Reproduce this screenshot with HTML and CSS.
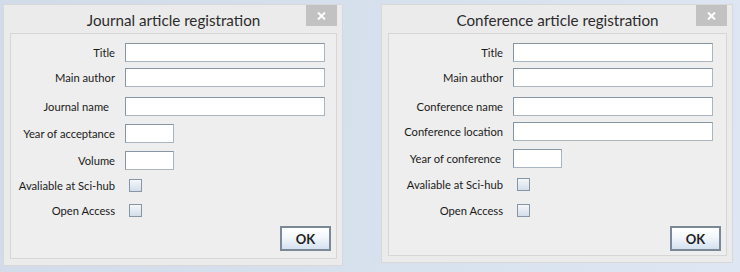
FILE: index.html
```html
<!DOCTYPE html>
<html lang="en">
<head>
    <meta charset="UTF-8">
    <meta name="viewport" content="width=device-width, initial-scale=1.0">
    <title>Article registration</title>
    <link rel="stylesheet" href="styles.css">
</head>
<body>
    <!-- Journal dialog -->
    <div class="window journal">
        <div class="titlebar">
            <span class="title">Journal article registration</span>
            <span class="close">
                <svg width="9" height="8" viewBox="0 0 9 8"><path d="M1 0.5 L8 7.5 M8 0.5 L1 7.5" stroke="#ffffff" stroke-width="1.9"/></svg>
            </span>
        </div>
        <div class="panel">
            <div class="row">
                <span class="label">Title</span>
                <span class="field"></span>
            </div>
            <div class="row near">
                <span class="label">Main author</span>
                <span class="field"></span>
            </div>
            <div class="row far">
                <span class="label indent">Journal name</span>
                <span class="field"></span>
            </div>
            <div class="row">
                <span class="label">Year of acceptance</span>
                <span class="field small"></span>
            </div>
            <div class="row">
                <span class="label">Volume</span>
                <span class="field small"></span>
            </div>
            <div class="row near">
                <span class="label">Avaliable at Sci-hub</span>
                <span class="check"></span>
            </div>
            <div class="row near">
                <span class="label">Open Access</span>
                <span class="check"></span>
            </div>
            <div class="actions">
                <button class="ok">OK</button>
            </div>
        </div>
    </div>

    <!-- Conference dialog -->
    <div class="window conference">
        <div class="titlebar">
            <span class="title">Conference article registration</span>
            <span class="close">
                <svg width="9" height="8" viewBox="0 0 9 8"><path d="M1 0.5 L8 7.5 M8 0.5 L1 7.5" stroke="#ffffff" stroke-width="1.9"/></svg>
            </span>
        </div>
        <div class="panel">
            <div class="row">
                <span class="label">Title</span>
                <span class="field"></span>
            </div>
            <div class="row near">
                <span class="label">Main author</span>
                <span class="field"></span>
            </div>
            <div class="row far">
                <span class="label">Conference name</span>
                <span class="field"></span>
            </div>
            <div class="row near">
                <span class="label">Conference location</span>
                <span class="field"></span>
            </div>
            <div class="row">
                <span class="label indent-small">Year of conference</span>
                <span class="field small"></span>
            </div>
            <div class="row mid">
                <span class="label">Avaliable at Sci-hub</span>
                <span class="check"></span>
            </div>
            <div class="row mid">
                <span class="label">Open Access</span>
                <span class="check"></span>
            </div>
            <div class="actions">
                <button class="ok">OK</button>
            </div>
        </div>
    </div>
</body>
</html>
```

FILE: styles.css
```css
/* Desktop */
body {
    margin: 0;
    padding: 4px 0 0 3px;
    height: 272px;
    box-sizing: border-box;
    overflow: hidden;
    display: flex;
    align-items: flex-start;
    gap: 38px;
    background: linear-gradient(100deg, #d2dbe9 0%, #d8e1ee 60%, #dde6f2 100%);
    font-family: 'Lato', 'Liberation Sans', sans-serif;
    color: #1a1a1a;
}

/* Dialog frame */
.window {
    position: relative;
    box-sizing: border-box;
    background: #ebebeb;
    border: 1px solid #d8d8d8;
    padding: 0 5px 6px 6px;
}

.journal {
    width: 340px;
    height: 262px;
}

.conference {
    width: 352px;
    height: 259px;
}

.titlebar {
    height: 28px;
    display: flex;
    justify-content: center;
    align-items: center;
}

.title {
    font-size: 15.2px;
    color: #2b2b2b;
    padding-top: 2px;
}

.close {
    position: absolute;
    top: 0;
    right: 5px;
    width: 31px;
    height: 21px;
    background: #c2c2c2;
    display: flex;
    justify-content: center;
    align-items: center;
}

.close svg {
    display: block;
}

/* Content panel */
.panel {
    box-sizing: border-box;
    height: calc(100% - 28px);
    background: #eeeeee;
    border: 1px solid #d6d6d6;
    padding: 9px 5px 0 0;
    display: flex;
    flex-direction: column;
}

.row {
    display: flex;
    align-items: center;
    gap: 10px;
    height: 19px;
    margin-top: 8px;
}

.row:first-child {
    margin-top: 0;
}

.row.near {
    margin-top: 6px;
}

.row.mid {
    margin-top: 7px;
}

.row.far {
    margin-top: 10px;
}

.label {
    flex: none;
    text-align: right;
    font-size: 11.2px;
    white-space: nowrap;
    box-sizing: border-box;
}

.journal .label {
    width: 104px;
}

.conference .label {
    width: 114px;
}

.label.indent {
    padding-right: 6px;
}

.label.indent-small {
    padding-right: 2px;
}

.field {
    box-sizing: border-box;
    width: 200px;
    height: 19px;
    background: #ffffff;
    border: 1px solid #8796a5;
    border-right-color: #a9b5c1;
    border-bottom-color: #a9b5c1;
}

.field.small {
    width: 49px;
}

.check {
    box-sizing: border-box;
    width: 13px;
    height: 13px;
    margin-left: 4px;
    border: 1px solid #8796a5;
    background: linear-gradient(#f5f7fa, #d3ddea);
}

.actions {
    display: flex;
    justify-content: flex-end;
    margin-top: 6px;
}

.ok {
    box-sizing: border-box;
    width: 51px;
    height: 25px;
    padding: 0;
    border: 2px solid #7a8897;
    background: linear-gradient(#ffffff 0%, #f2f6fb 45%, #d4e1ef 100%);
    font-family: 'Lato', 'Liberation Sans', sans-serif;
    font-size: 13px;
    font-weight: bold;
    color: #1e1e1e;
}
```
